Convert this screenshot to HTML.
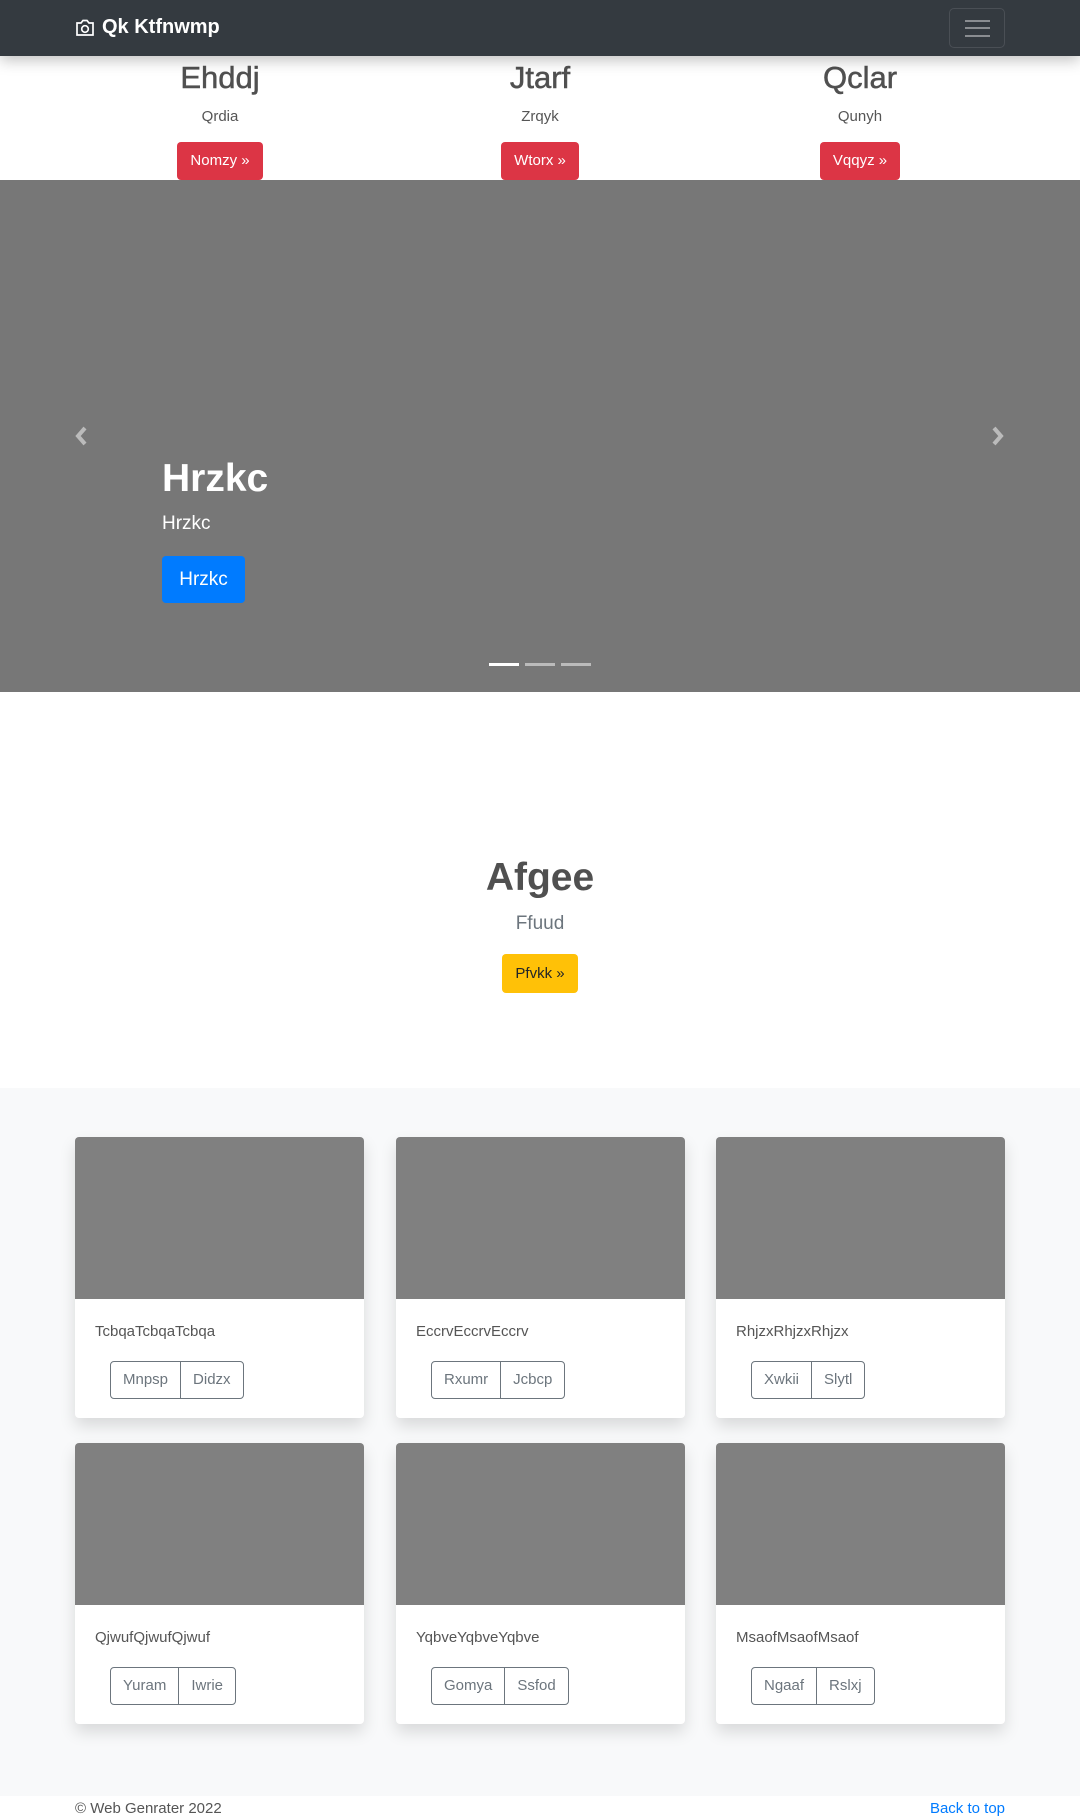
<!DOCTYPE html>
<html><head><meta charset="utf-8"><style>
*{box-sizing:border-box;margin:0;padding:0}
body{width:1080px;height:1820px;position:relative;font-family:"Liberation Sans",sans-serif;background:#fff;color:#212529;overflow:hidden}
.abs{position:absolute}
.nav{left:0;top:0;width:1080px;height:56px;background:#343a40;box-shadow:0 4px 14px rgba(0,0,0,.25);z-index:5}
.brand{left:75px;top:16px;color:#fff;font-weight:bold;font-size:20px;display:flex;align-items:center;gap:7px}
.tog{left:949px;top:8px;width:56px;height:40px;border:1px solid #4a4f55;border-radius:5px}
.tog i{position:absolute;left:15px;width:25px;height:2px;background:#8a8d91}
.col{width:300px;text-align:center}
.col h2{font-size:31px;font-weight:normal;color:#505050;line-height:1;-webkit-text-stroke:.5px #505050}
.col p{font-size:15px;color:#555;margin-top:15px}
.rbtn{display:inline-block;background:#dc3545;color:#fff;font-size:15px;height:38px;line-height:38px;padding:0 13px;border-radius:4px;margin-top:17px}
.car{left:0;top:180px;width:1080px;height:512px;background:#777}
.card{width:289px;height:281px;background:#fff;border-radius:4px;box-shadow:0 8px 16px rgba(0,0,0,.13)}
.card .img{height:162px;background:#808080;border-radius:4px 4px 0 0}
.card .t{position:absolute;left:20px;top:186px;font-size:15px;color:#555}
.bg{position:absolute;left:35px;top:224px;display:flex;border:1px solid #6c757d;border-radius:4px;height:38px}
.bg span{padding:0 12px;line-height:36px;font-size:15px;color:#6c757d}
.bg span+span{border-left:1px solid #6c757d}
</style></head><body>
<div class="abs nav">
 <div class="abs brand"><svg width="20" height="18" viewBox="0 0 20 18"><path d="M2 4h4l2-2.5h4L14 4h4v12H2z" fill="none" stroke="#fff" stroke-width="1.7"/><circle cx="10" cy="10" r="3.3" fill="none" stroke="#fff" stroke-width="1.7"/></svg>Qk Ktfnwmp</div>
 <div class="abs tog"><i style="top:11px"></i><i style="top:18px"></i><i style="top:26px"></i></div>
</div>
<div class="abs col" style="left:70px;top:62px"><h2>Ehddj</h2><p>Qrdia</p><span class="rbtn">Nomzy »</span></div>
<div class="abs col" style="left:390px;top:62px"><h2>Jtarf</h2><p>Zrqyk</p><span class="rbtn">Wtorx »</span></div>
<div class="abs col" style="left:710px;top:62px"><h2>Qclar</h2><p>Qunyh</p><span class="rbtn">Vqqyz »</span></div>
<div class="abs car">
 <svg class="abs" style="left:74px;top:246px" width="14" height="20" viewBox="0 0 14 20"><path d="M11 2L4 10l7 8" fill="none" stroke="#bbb" stroke-width="4"/></svg>
 <svg class="abs" style="left:991px;top:246px" width="14" height="20" viewBox="0 0 14 20"><path d="M3 2l7 8-7 8" fill="none" stroke="#bbb" stroke-width="4"/></svg>
 <div class="abs" style="left:162px;top:277px;color:#fff;font-size:39px;font-weight:bold">Hrzkc</div>
 <div class="abs" style="left:162px;top:333px;color:#fff;font-size:19px">Hrzkc</div>
 <div class="abs" style="left:162px;top:376px;width:83px;height:47px;background:#007bff;border-radius:4px;color:#fff;font-size:19px;line-height:47px;text-align:center">Hrzkc</div>
 <div class="abs" style="left:489px;top:483px;width:30px;height:3px;background:#fff"></div>
 <div class="abs" style="left:525px;top:483px;width:30px;height:3px;background:#bbb"></div>
 <div class="abs" style="left:561px;top:483px;width:30px;height:3px;background:#bbb"></div>
</div>
<div class="abs" style="left:0;top:856px;width:1080px;text-align:center;font-size:39px;font-weight:bold;color:#505050">Afgee</div>
<div class="abs" style="left:0;top:913px;width:1080px;text-align:center;font-size:19px;color:#6c757d">Ffuud</div>
<div class="abs" style="left:502px;top:954px;width:76px;height:39px;background:#ffc107;border-radius:4px;font-size:15px;line-height:39px;text-align:center;color:#212529">Pfvkk »</div>
<div class="abs" style="left:0;top:1088px;width:1080px;height:708px;background:#f8f9fa"></div>
<div class="abs card" style="left:75px;top:1137px"><div class="img"></div><div class="t">TcbqaTcbqaTcbqa</div><div class="bg"><span>Mnpsp</span><span>Didzx</span></div></div>
<div class="abs card" style="left:396px;top:1137px"><div class="img"></div><div class="t">EccrvEccrvEccrv</div><div class="bg"><span>Rxumr</span><span>Jcbcp</span></div></div>
<div class="abs card" style="left:716px;top:1137px"><div class="img"></div><div class="t">RhjzxRhjzxRhjzx</div><div class="bg"><span>Xwkii</span><span>Slytl</span></div></div>
<div class="abs card" style="left:75px;top:1443px"><div class="img"></div><div class="t">QjwufQjwufQjwuf</div><div class="bg"><span>Yuram</span><span>Iwrie</span></div></div>
<div class="abs card" style="left:396px;top:1443px"><div class="img"></div><div class="t">YqbveYqbveYqbve</div><div class="bg"><span>Gomya</span><span>Ssfod</span></div></div>
<div class="abs card" style="left:716px;top:1443px"><div class="img"></div><div class="t">MsaofMsaofMsaof</div><div class="bg"><span>Ngaaf</span><span>Rslxj</span></div></div>
<div class="abs" style="left:75px;top:1800px;font-size:15px;color:#555">© Web Genrater 2022</div>
<div class="abs" style="left:900px;top:1800px;width:105px;text-align:right;font-size:15px;color:#007bff">Back to top</div>
</body></html>
